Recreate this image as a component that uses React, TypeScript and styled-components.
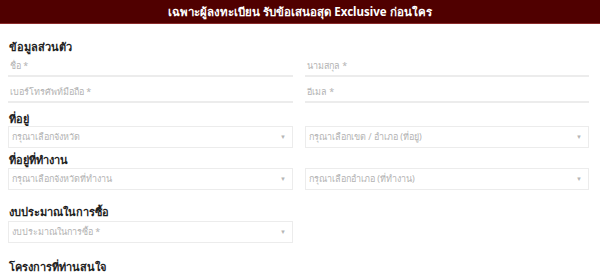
import React from "react";
import styled, { createGlobalStyle } from "styled-components";

const Global = createGlobalStyle`
  html, body { margin: 0; padding: 0; background: #fff; }
  body { font-family: "Noto Sans", "Open Sans", sans-serif; }
  * { box-sizing: border-box; }
`;

const Banner = styled.div`
  height: 24px;
  background: #500000;
  border-bottom: 1px solid #8a2b2b;
  color: #fff;
  font-weight: 700;
  font-size: 11.5px;
  display: flex;
  align-items: center;
  justify-content: center;
`;

const Form = styled.div`
  padding: 16px 11px 0 8px;
  display: flex;
  flex-direction: column;
`;

const Heading = styled.div<{ $top?: number }>`
  font-size: 11px;
  font-weight: 700;
  color: #1e1e1e;
  line-height: 14px;
  height: 14px;
  margin-top: ${(p) => p.$top ?? 0}px;
  padding-left: 1px;
`;

const Row = styled.div<{ $top?: number }>`
  display: grid;
  grid-template-columns: 285px 284px;
  column-gap: 12px;
  margin-top: ${(p) => p.$top ?? 0}px;
`;

const Underline = styled.div<{ $h: number }>`
  height: ${(p) => p.$h}px;
  border-bottom: 2px solid #ececec;
  display: flex;
  align-items: flex-end;
  padding: 0 0 3px 2px;
  line-height: 12px;
  font-size: 9px;
  color: #b3b3b3;
`;

const Select = styled.div`
  height: 22px;
  border: 1px solid #ececec;
  display: flex;
  align-items: center;
  justify-content: space-between;
  padding: 0 6px 0 3px;
  font-size: 9px;
  color: #b3b3b3;
`;

const Caret = styled.span`
  font-size: 6px;
  color: #b5b5b5;
`;

const Field = ({ label, h }: { label: string; h: number }) => (
  <Underline $h={h}>{label}</Underline>
);

const Drop = ({ label }: { label: string }) => (
  <Select>
    <span>{label}</span>
    <Caret>▼</Caret>
  </Select>
);

export default function App() {
  return (
    <>
      <Global />
      <Banner>เฉพาะผู้ลงทะเบียน รับข้อเสนอสุด Exclusive ก่อนใคร</Banner>
      <Form>
        <Heading>ข้อมูลส่วนตัว</Heading>
        <Row>
          <Field h={23} label="ชื่อ *" />
          <Field h={23} label="นามสกุล *" />
        </Row>
        <Row>
          <Field h={26} label="เบอร์โทรศัพท์มือถือ *" />
          <Field h={26} label="อีเมล *" />
        </Row>
        <Heading $top={9}>ที่อยู่</Heading>
        <Row>
          <Drop label="กรุณาเลือกจังหวัด" />
          <Drop label="กรุณาเลือกเขต / อำเภอ (ที่อยู่)" />
        </Row>
        <Heading $top={5}>ที่อยู่ที่ทำงาน</Heading>
        <Row $top={1}>
          <Drop label="กรุณาเลือกจังหวัดที่ทำงาน" />
          <Drop label="กรุณาเลือกอำเภอ (ที่ทำงาน)" />
        </Row>
        <Heading $top={15}>งบประมาณในการซื้อ</Heading>
        <Row $top={2}>
          <Drop label="งบประมาณในการซื้อ *" />
        </Row>
        <Heading $top={17}>โครงการที่ท่านสนใจ</Heading>
      </Form>
    </>
  );
}
